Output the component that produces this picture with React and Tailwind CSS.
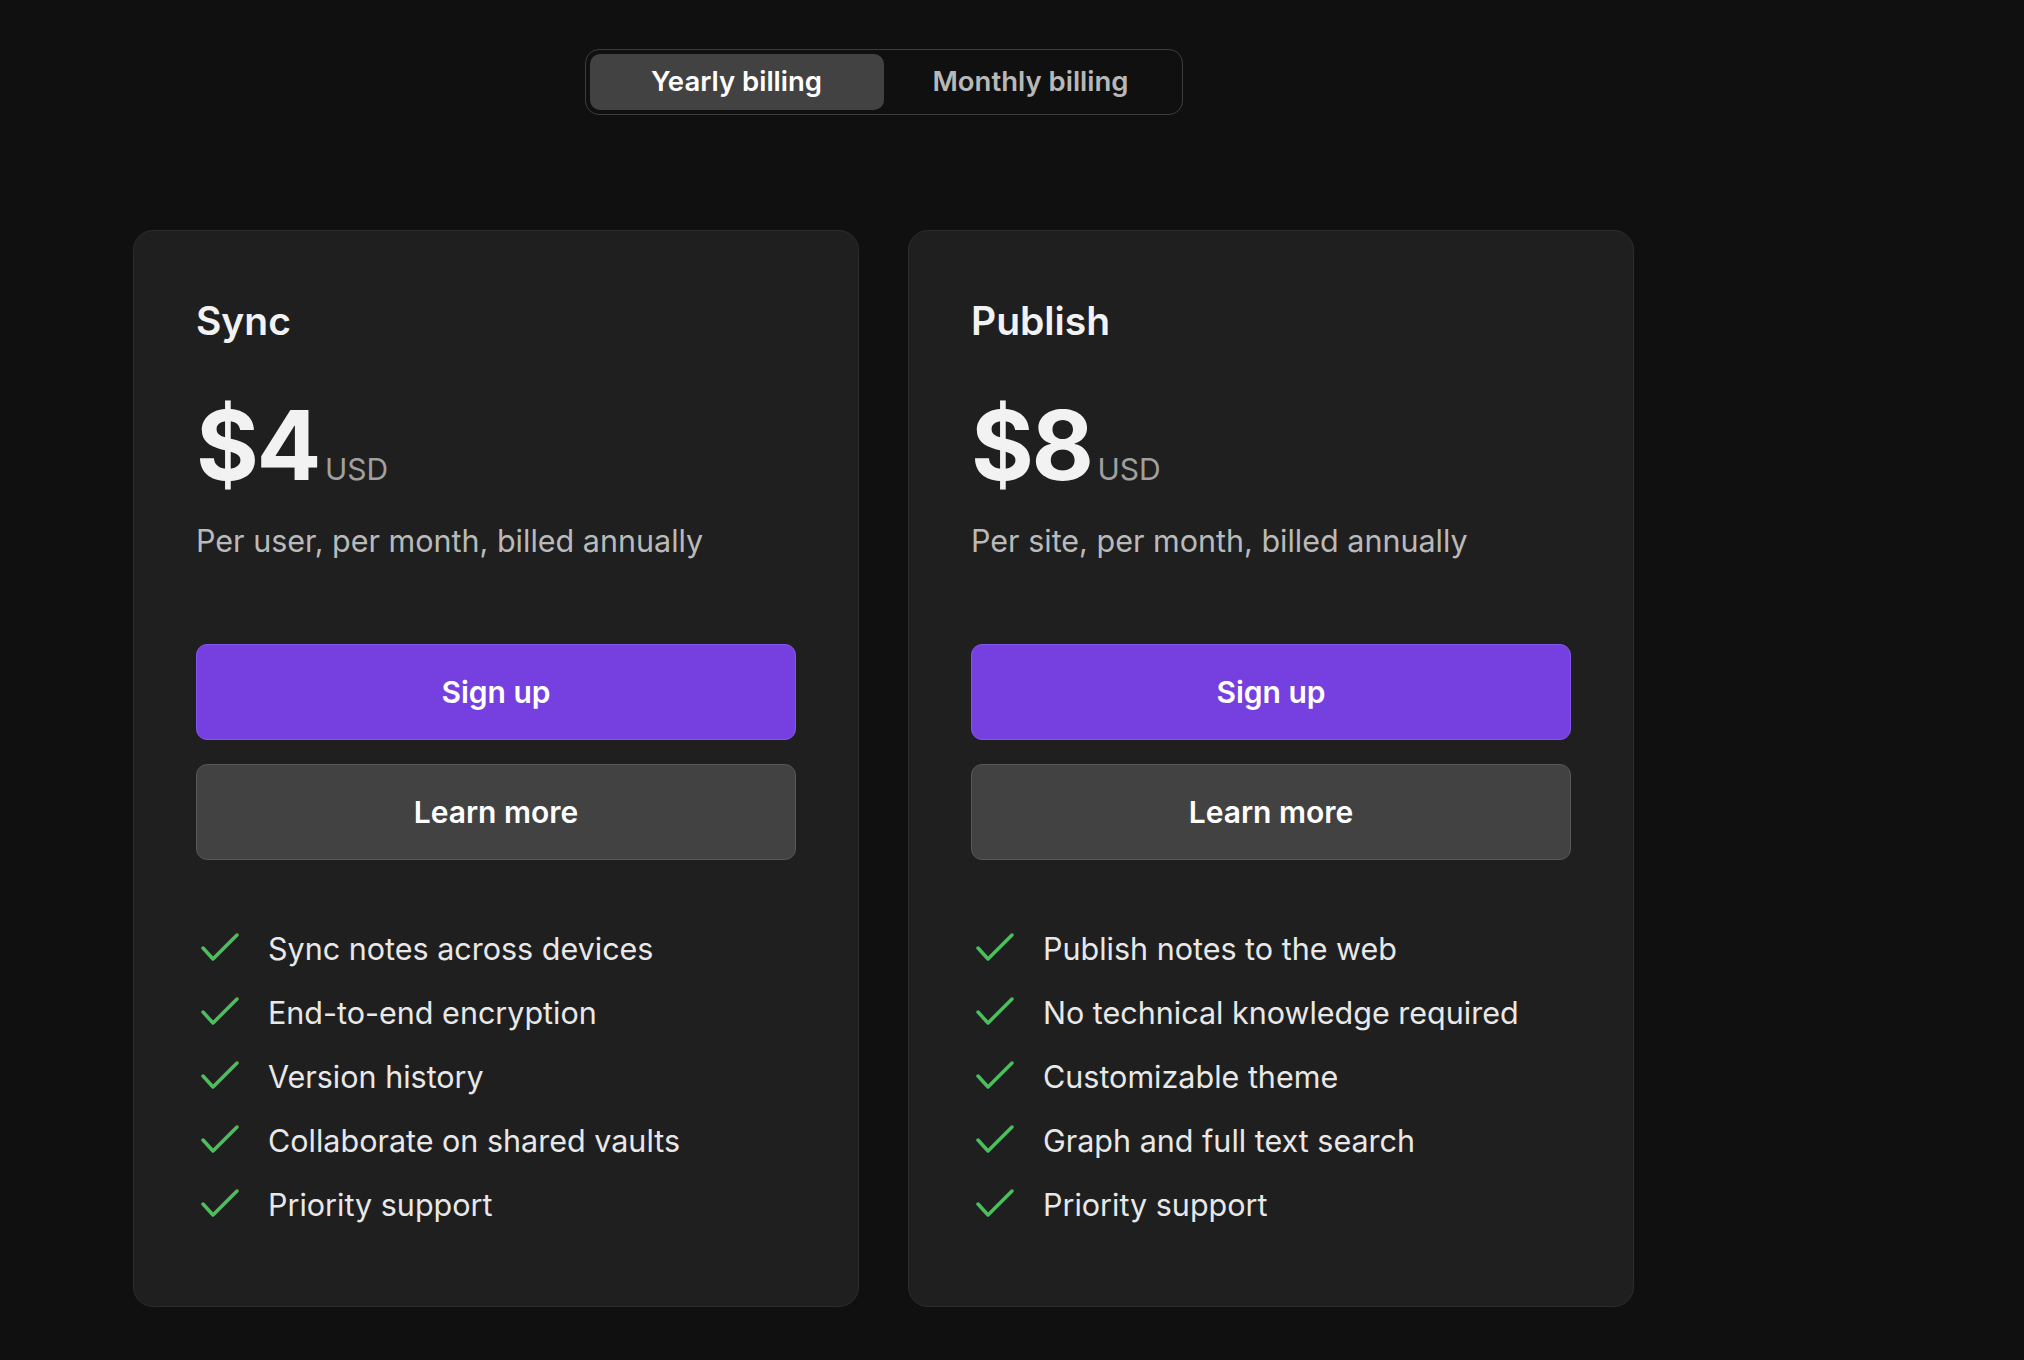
import React from 'react';

const plans = [
  {
    name: 'Sync',
    price: '$4',
    note: 'Per user, per month, billed annually',
    features: [
      'Sync notes across devices',
      'End-to-end encryption',
      'Version history',
      'Collaborate on shared vaults',
      'Priority support',
    ],
  },
  {
    name: 'Publish',
    price: '$8',
    note: 'Per site, per month, billed annually',
    features: [
      'Publish notes to the web',
      'No technical knowledge required',
      'Customizable theme',
      'Graph and full text search',
      'Priority support',
    ],
  },
];

const CheckIcon = () => (
  <svg width="44" height="32" viewBox="0 0 44 32" fill="none" className="ml-[2px] shrink-0">
    <polyline
      points="5,15 15,26 39,2"
      stroke="#4ebd5e"
      strokeWidth="3.5"
      strokeLinecap="round"
      strokeLinejoin="round"
    />
  </svg>
);

const PlanCard = ({ plan }) => {
  const { name, price, note, features } = plan;

  return (
    <div className="w-[726px] bg-[#1f1f1f] border border-[#2c2c2c] rounded-[20px] px-[62px] pt-[70px] pb-[69px]">
      <h2 className="text-[39px] leading-none font-semibold text-[#f2f2f2]">{name}</h2>

      <div className="mt-[57px] flex items-baseline">
        <span className="text-[96px] leading-none font-bold tracking-tight text-[#f2f2f2]">{price}</span>
        <span className="ml-[6px] text-[30px] leading-none text-[#a0a0a0]">USD</span>
      </div>
      <p className="mt-[25px] text-[30.5px] leading-[45px] text-[#bababa]">{note}</p>

      <button className="mt-[81px] w-full h-[96px] rounded-[11px] bg-[#7540df] border border-[#8656ec] text-white text-[30px] font-semibold">
        Sign up
      </button>
      <button className="mt-[24px] w-full h-[96px] rounded-[11px] bg-[#424242] border border-[#575757] text-white text-[30px] font-semibold">
        Learn more
      </button>

      <ul className="mt-[57px]">
        {features.map((f) => (
          <li key={f} className="h-[64px] flex items-center gap-[26px] text-[30.5px] text-[#e8e8e8]">
            <CheckIcon />
            <span>{f}</span>
          </li>
        ))}
      </ul>
    </div>
  );
};

export default function App() {
  return (
    <div className="min-h-screen bg-[#101010] font-['Inter',sans-serif] pt-[49px] pl-[133px]">
      <div className="w-[1501px]">
        {/* billing switch */}
        <div className="flex justify-center">
          <div className="flex p-1 border border-[#3d3d3d] rounded-[14px]">
            <button className="w-[294px] h-[56px] rounded-[10px] bg-[#424242] text-white text-[27.5px] font-semibold">
              Yearly billing
            </button>
            <button className="w-[294px] h-[56px] rounded-[10px] text-[#b8b8b8] text-[27.5px] font-semibold">
              Monthly billing
            </button>
          </div>
        </div>

        <div className="mt-[115px] flex gap-[49px]">
          {plans.map((p) => (
            <PlanCard key={p.name} plan={p} />
          ))}
        </div>
      </div>
    </div>
  );
}
